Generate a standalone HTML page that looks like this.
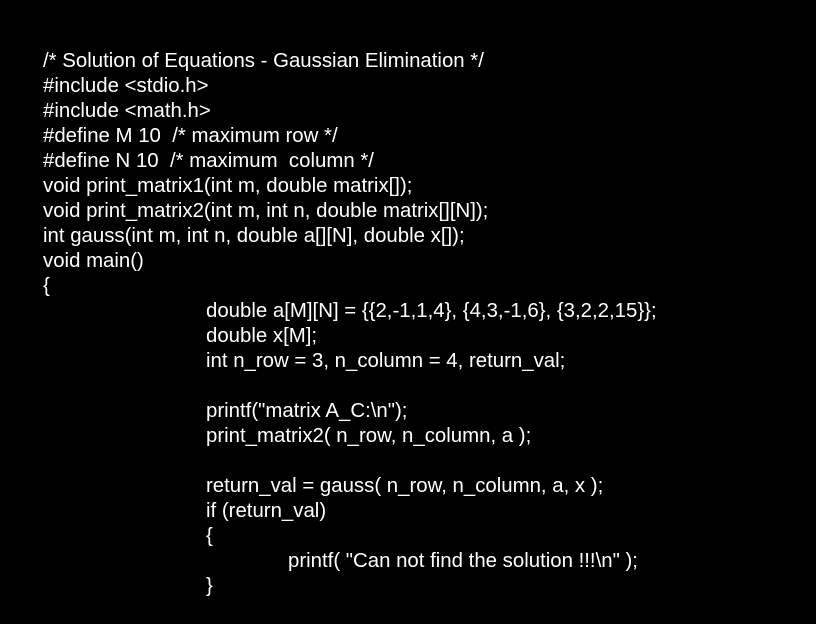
<!DOCTYPE html>
<html><head><meta charset="utf-8"><style>
html,body{margin:0;padding:0;background:#000;}
body{width:816px;height:624px;overflow:hidden;position:relative;}
.l{position:absolute;color:#fff;font-family:"Liberation Sans",Arial,sans-serif;font-size:20.4px;line-height:25px;white-space:pre;}
</style></head><body>
<div class="l" style="left:43px;top:49px">/* Solution of Equations - Gaussian Elimination */</div>
<div class="l" style="left:43px;top:74px">#include &lt;stdio.h&gt;</div>
<div class="l" style="left:43px;top:99px">#include &lt;math.h&gt;</div>
<div class="l" style="left:43px;top:124px">#define M 10  /* maximum row */</div>
<div class="l" style="left:43px;top:149px">#define N 10  /* maximum  column */</div>
<div class="l" style="left:43px;top:174px">void print_matrix1(int m, double matrix[]);</div>
<div class="l" style="left:43px;top:199px">void print_matrix2(int m, int n, double matrix[][N]);</div>
<div class="l" style="left:43px;top:224px">int gauss(int m, int n, double a[][N], double x[]);</div>
<div class="l" style="left:43px;top:249px">void main()</div>
<div class="l" style="left:43px;top:274px">{</div>
<div class="l" style="left:206px;top:299px">double a[M][N] = {{2,-1,1,4}, {4,3,-1,6}, {3,2,2,15}};</div>
<div class="l" style="left:206px;top:324px">double x[M];</div>
<div class="l" style="left:206px;top:349px">int n_row = 3, n_column = 4, return_val;</div>
<div class="l" style="left:206px;top:399px">printf("matrix A_C:\n");</div>
<div class="l" style="left:206px;top:424px">print_matrix2( n_row, n_column, a );</div>
<div class="l" style="left:206px;top:474px">return_val = gauss( n_row, n_column, a, x );</div>
<div class="l" style="left:206px;top:499px">if (return_val)</div>
<div class="l" style="left:206px;top:524px">{</div>
<div class="l" style="left:288px;top:549px">printf( "Can not find the solution !!!\n" );</div>
<div class="l" style="left:206px;top:574px">}</div>
</body></html>
